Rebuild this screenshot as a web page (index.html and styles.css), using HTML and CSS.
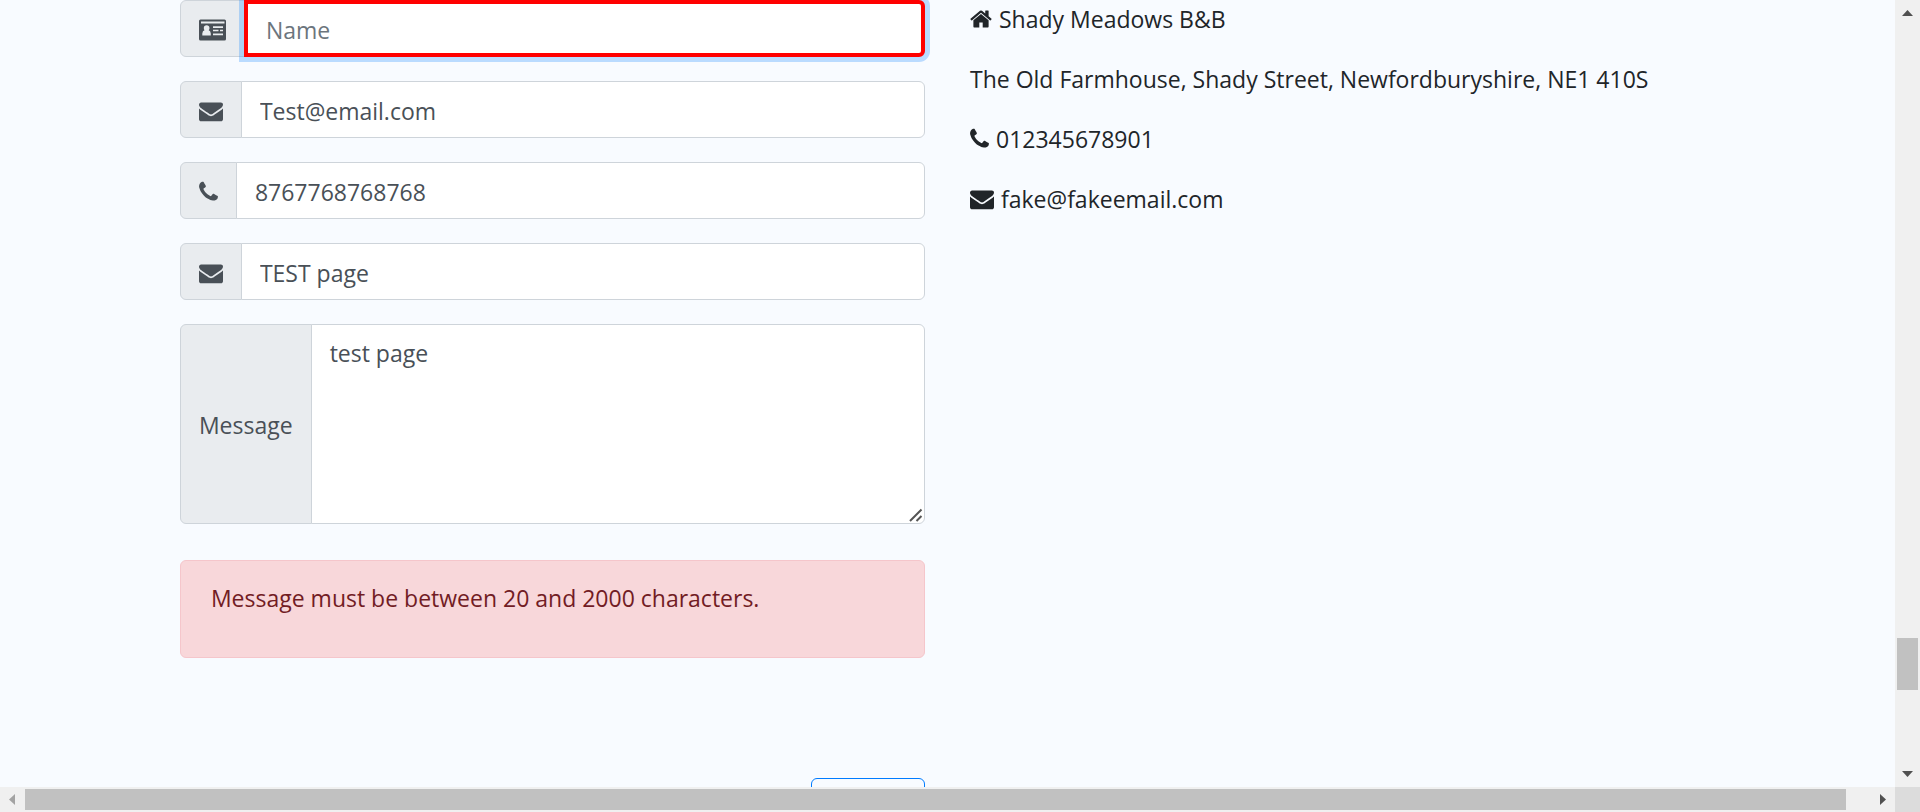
FILE: index.html
```html
<!DOCTYPE html>
<html lang="en">
<head>
<meta charset="utf-8">
<title>Shady Meadows B&amp;B</title>
<link rel="stylesheet" href="styles.css">
</head>
<body>
<svg class="symbols" aria-hidden="true">
  <symbol id="envelope" viewBox="0 0 1792 1792"><path d="M1792 710v794q0 66-47 113t-113 47h-1472q-66 0-113-47t-47-113v-794q44 49 101 87 362 246 497 345 57 42 92.500 65.500t94.500 48 110 24.500h2q51 0 110-24.500t94.500-48 92.500-65.500q170-123 498-345 57-39 100-87zm0-294q0 79-49 151t-122 123q-376 261-468 325-10 7-42.500 31t-54 38.500-52 32.500-57.500 27-50 9h-2q-23 0-50-9t-57.500-27-52-32.500-54-38.500-42.500-31q-91-64-262-182.500t-205-142.500q-62-42-117-115.500t-55-136.500q0-78 41.500-130t118.500-52h1472q65 0 112.500 47t47.500 113z"/></symbol>
  <symbol id="phone" viewBox="192 0 1408 1792"><path d="M1600 1240q0 27-10 70.500t-21 68.500q-21 50-122 106-94 51-186 51-27 0-53-3.500t-57.500-12.500-47-14.500-55.500-20.500-49-18q-98-35-175-83-127-79-264-216t-216-264q-48-77-83-175-3-9-18-49t-20.500-55.500-14.500-47-12.500-57.500-3.500-53q0-92 51-186 56-101 106-122 25-11 68.500-21t70.500-10q14 0 21 3 18 6 53 76 11 19 30 54t35 63.500 31 53.500q3 4 17.500 25t21.500 35.500 7 28.500q0 20-28.500 50t-62 55-62 53-28.500 46q0 9 5 22.500t8.500 20.500 14 24 11.500 19q76 137 174 235t235 174q2 1 19 11.500t24 14 20.500 8.500 22.500 5q18 0 46-28.500t53-62 55-62 50-28.500q14 0 28.500 7t35.500 21.500 25 17.500q25 15 53.500 31t63.500 35 54 30q70 35 76 53 3 7 3 21z"/></symbol>
  <symbol id="home" viewBox="64 0 1664 1792"><path d="M1472 992v480q0 26-19 45t-45 19h-384v-384h-256v384h-384q-26 0-45-19t-19-45v-480q0-1 .5-3t.5-3l575-474 575 474q1 2 1 6zm223-69l-62 74q-8 9-21 11h-3q-13 0-21-7l-692-577-692 577q-12 8-24 7-13-2-21-11l-62-74q-8-10-7-23.500t11-21.500l719-599q32-26 76-26t76 26l244 204v-195q0-14 9-23t23-9h192q14 0 23 9t9 23v408l219 182q10 8 11 21.500t-7 23.500z"/></symbol>
  <symbol id="id-card" viewBox="0 0 27 24"><path fill-rule="evenodd" d="M1.500 1.500H25.500Q27 1.500 27 3V21Q27 22.500 25.500 22.500H1.500Q0 22.500 0 21V3Q0 1.500 1.500 1.500ZM2 3.500V5.500H25.500V3.500ZM3.300 17.500H11.800V15.500Q11.500 12.600 9.700 12.300Q10.500 11.300 10.500 10Q10.300 7.300 7.600 7.200Q4.900 7.300 4.800 10Q4.800 11.300 5.500 12.300Q3.500 12.600 3.300 15.500ZM14 8.200V9.900H24V8.200ZM14 11.800V13.300H19.500V11.800ZM21 11.800V13.300H24V11.800ZM14 15.500V17.200H24V15.500Z"/></symbol>
</svg>
<div class="window">
  <main class="page">
    <form class="contact-form">
      <div class="group">
        <label class="addon" for="name" aria-label="Name"><svg class="icon icon-card"><use href="#id-card"/></svg></label>
        <input class="field field-focused" id="name" type="text" placeholder="Name">
      </div>
      <div class="group">
        <label class="addon" for="email" aria-label="Email"><svg class="icon"><use href="#envelope"/></svg></label>
        <input class="field" id="email" type="text" value="Test@email.com">
      </div>
      <div class="group">
        <label class="addon" for="phone-number" aria-label="Phone"><svg class="icon icon-phone"><use href="#phone"/></svg></label>
        <input class="field" id="phone-number" type="text" value="8767768768768">
      </div>
      <div class="group">
        <label class="addon" for="subject" aria-label="Subject"><svg class="icon"><use href="#envelope"/></svg></label>
        <input class="field" id="subject" type="text" value="TEST page">
      </div>
      <div class="group">
        <label class="addon" for="message">Message</label>
        <textarea class="field message" id="message" rows="5">test page</textarea>
        <svg class="grip" viewBox="0 0 14 14" aria-hidden="true"><path d="M1 13 12.500 1.500M7.500 13 12.500 8"/></svg>
      </div>
      <div class="alert" role="alert"><p class="alert-text">Message must be between 20 and 2000 characters.</p></div>
      <button class="submit" type="button" aria-label="Submit"></button>
    </form>
    <address class="details">
      <p class="detail"><svg class="icon icon-home"><use href="#home"/></svg>Shady Meadows B&amp;B</p>
      <p class="detail">The Old Farmhouse, Shady Street, Newfordburyshire, NE1 410S</p>
      <p class="detail"><svg class="icon icon-phone"><use href="#phone"/></svg>012345678901</p>
      <p class="detail"><svg class="icon"><use href="#envelope"/></svg>fake@fakeemail.com</p>
    </address>
  </main>
  <div class="bar bar-vertical">
    <button class="arrow" type="button" aria-label="Scroll up"><svg class="arrow-icon" viewBox="0 0 25 25"><path d="M7 16 12.500 10 18 16Z"/></svg></button>
    <div class="track"><div class="thumb"></div></div>
    <button class="arrow" type="button" aria-label="Scroll down"><svg class="arrow-icon" viewBox="0 0 25 25"><path d="M7 9H18L12.500 15Z"/></svg></button>
  </div>
  <div class="bar bar-horizontal">
    <button class="arrow arrow-disabled" type="button" aria-label="Scroll left" disabled><svg class="arrow-icon" viewBox="0 0 25 25"><path d="M15 7V18L9 12.500Z"/></svg></button>
    <div class="track"><div class="thumb"></div></div>
    <button class="arrow" type="button" aria-label="Scroll right"><svg class="arrow-icon" viewBox="0 0 25 25"><path d="M10 7V18L16 12.500Z"/></svg></button>
  </div>
  <div class="corner"></div>
</div>
</body>
</html>
```
FILE: styles.css
```css
* { box-sizing: border-box; }

body {
  margin: 0;
  background: #f8fbff;
  color: #212529;
  font-family: "Open Sans", "Noto Sans", sans-serif;
  font-size: 23px;
  line-height: 36px;
}

.symbols { display: none; }

.window {
  display: grid;
  grid-template-columns: minmax(0, 1fr) 25px;
  grid-template-rows: minmax(0, 1fr) 25px;
  height: 100vh;
}

.page {
  display: grid;
  grid-template-columns: 1fr 1fr;
  gap: 45px;
  padding: 0 calc(100% / 12 + 22px);
  overflow: hidden;
}

.contact-form {
  display: flex;
  flex-direction: column;
}

.group {
  display: flex;
  position: relative;
  margin-bottom: 24px;
}

.addon {
  display: flex;
  align-items: center;
  padding: 2px 18px 0;
  border: 1px solid #ced4da;
  border-radius: 6px 0 0 6px;
  background: #e9ecef;
  color: #495057;
}

.icon {
  flex: none;
  width: 24px;
  height: 24px;
  fill: currentColor;
}
.icon-card { width: 27px; }
.icon-phone { width: 19px; }
.icon-home { width: 22px; }

.field {
  flex: 1;
  min-width: 0;
  height: 57px;
  margin: 0 0 0 -1px;
  padding: 10px 18px 8px;
  border: 1px solid #ced4da;
  border-radius: 0 6px 6px 0;
  outline: 0;
  background: #fff;
  color: #495057;
  font: inherit;
}
.field::placeholder { color: #6c757d; opacity: 1; }

.field-focused {
  z-index: 1;
  border: 4px solid #f00;
  box-shadow: 0 0 0 5px rgba(0, 123, 255, .25);
}

.message {
  height: 200px;
  resize: none;
}

.grip {
  position: absolute;
  right: 2px;
  bottom: 2px;
  width: 14px;
  height: 14px;
  fill: none;
  stroke: #555;
  stroke-width: 2;
}

.alert {
  margin-top: 12px;
  padding: 19px 30px 17px;
  border: 1px solid #f5c6cb;
  border-radius: 6px;
  background: #f8d7da;
  color: #721c24;
}
.alert-text { margin: 0 0 24px; }

.submit {
  align-self: flex-end;
  width: 114px;
  height: 57px;
  margin-top: 120px;
  border: 1px solid #007bff;
  border-radius: 6px;
  background: transparent;
}

.details {
  padding-top: 1px;
  font-style: normal;
}

.detail {
  display: flex;
  align-items: center;
  gap: 7px;
  margin: 0 0 24px;
}

.bar {
  display: flex;
  background: #f0f0f0;
}
.bar-vertical { flex-direction: column; }

.arrow {
  flex: none;
  width: 25px;
  height: 25px;
  padding: 0;
  border: 0;
  background: transparent;
  color: #505050;
}
.arrow-disabled { color: #a3a3a3; }
.arrow-icon {
  display: block;
  fill: currentColor;
}

.track {
  display: flex;
  flex: 1;
}
.thumb { background: #c1c1c1; }

.bar-vertical .track {
  flex-direction: column;
  justify-content: flex-end;
  padding: 0 2px 72px;
}
.bar-vertical .thumb { height: 52px; }

.bar-horizontal .track { padding: 2px 24px 2px 0; }
.bar-horizontal .thumb { flex: 1; }

.corner { background: #dcdcdc; }
```
